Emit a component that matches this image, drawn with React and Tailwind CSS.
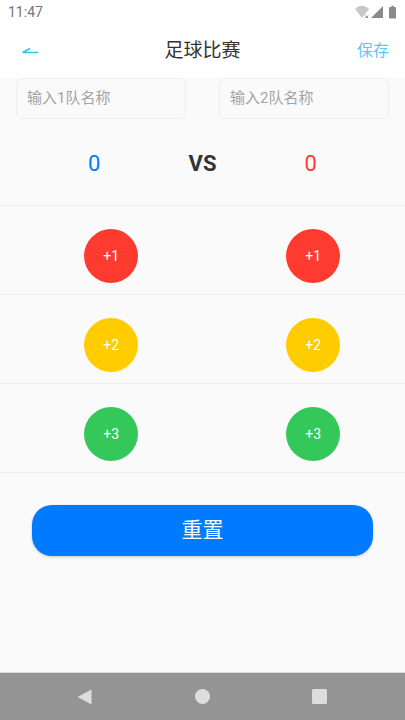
const FONT = "font-['Roboto','Noto_Sans_CJK_SC',sans-serif]";

function StatusIcons() {
  return (
    <svg width="43" height="14" viewBox="0 0 43 14" className="block">
      <path d="M0 4 C4 -0.5 10 -0.5 14 4 L7 13 Z" fill="#c8c8c8" />
      <path d="M10.5 10.5 l2.5 2.5 M13 10.5 l-2.5 2.5" stroke="#777" strokeWidth="1" />
      <path d="M28 1 V13 H16 Z" fill="#8a8a8a" />
      <path d="M34 3 a1 1 0 0 1 1-1 h1.5 V0.5 h2 V2 H40 a1 1 0 0 1 1 1 V13.5 h-7 Z" fill="#8a8a8a" />
    </svg>
  );
}

function ScoreButton({ label, color }) {
  return (
    <button className={`flex h-[54px] w-[54px] items-center justify-center rounded-full text-[14px] text-white ${color}`}>
      {label}
    </button>
  );
}

function ButtonRow({ label, color }) {
  return (
    <div className="grid h-[89px] grid-cols-2 items-center border-b border-[#eeeeee] pt-[12px]">
      <div className="flex justify-center pl-[20px]">
        <ScoreButton label={label} color={color} />
      </div>
      <div className="flex justify-center pl-[19px]">
        <ScoreButton label={label} color={color} />
      </div>
    </div>
  );
}

function TeamInput({ placeholder }) {
  return (
    <div className="flex h-[41px] w-[170px] items-center rounded-[6px] border border-[#eeeeee] px-[10px] text-[15px] text-[#a3a3a3]">
      {placeholder}
    </div>
  );
}

export default function App() {
  return (
    <div className={`flex h-[720px] w-[405px] flex-col overflow-hidden bg-[#fafafa] ${FONT}`}>
      <div className="flex h-[24px] items-center justify-between bg-white pl-[8px] pr-[7px] text-[14px] text-[#757575]">
        <span>11:47</span>
        <StatusIcons />
      </div>
      <div className="flex h-[54px] items-center bg-white pl-[22px] pr-[16px]">
        <div className="w-[26px] shrink-0">
          <svg width="16" height="8" viewBox="0 0 16 8" className="block">
            <path d="M0.5 5.5 H16 M0.5 5.5 L8 1.5" stroke="#37bdf8" strokeWidth="1.5" fill="none" />
          </svg>
        </div>
        <div className="flex-1 pt-px text-center text-[19px] text-[#333333]">足球比赛</div>
        <div className="text-[16px] text-[#5ac8fa]">保存</div>
      </div>
      <div className="flex justify-between pl-[16px] pr-[16px]">
        <TeamInput placeholder="输入1队名称" />
        <TeamInput placeholder="输入2队名称" />
      </div>
      <div className="flex h-[87px] items-center justify-between border-b border-[#eeeeee] pl-[88px] pr-[88px] pt-[3px]">
        <span className="text-[22px] text-[#007aff]">0</span>
        <span className="text-[22px] font-bold text-[#333333]">VS</span>
        <span className="text-[22px] text-[#ff3b30]">0</span>
      </div>
      <ButtonRow label="+1" color="bg-[#ff3b30]" />
      <ButtonRow label="+2" color="bg-[#ffcc00]" />
      <ButtonRow label="+3" color="bg-[#34c759]" />
      <div className="flex-1 px-[32px] pt-[32px]">
        <button className="flex h-[51px] w-[341px] items-center justify-center rounded-[20px] bg-[#007aff] pt-px text-[21px] text-white shadow-[0_1px_3px_rgba(0,0,0,0.2)]">
          重置
        </button>
      </div>
      <div className="flex h-[48px] items-center justify-between border-t border-[#d8d8d8] bg-[#949494] pl-[77px] pr-[78px]">
        <svg width="15" height="16" viewBox="0 0 15 16"><path d="M14.5 0.5 V15.5 L0.5 8 Z" fill="#dddddd" /></svg>
        <div className="h-[15px] w-[15px] rounded-full bg-[#dddddd]" />
        <div className="h-[15px] w-[15px] rounded-[1.5px] bg-[#dddddd]" />
      </div>
    </div>
  );
}
